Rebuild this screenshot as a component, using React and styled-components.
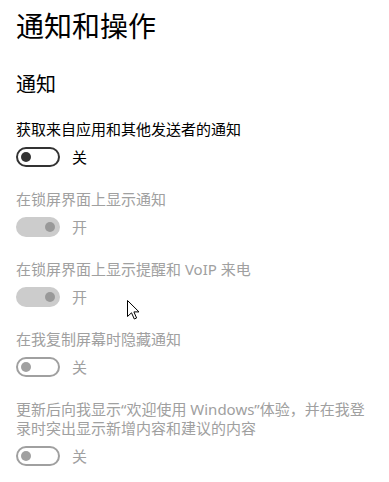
import styled, { createGlobalStyle } from "styled-components";

const GlobalStyle = createGlobalStyle`
  html, body {
    margin: 0;
    padding: 0;
    background: #fff;
  }
  body {
    font-family: "Noto Sans", "Noto Sans CJK SC", sans-serif;
  }
`;

const Page = styled.div`
  position: relative;
  width: 389px;
  height: 482px;
  overflow: hidden;
  padding: 6px 16px 0 16px;
  box-sizing: border-box;
`;

const Title = styled.h1`
  margin: 0;
  font-size: 28px;
  line-height: 40px;
  font-weight: 400;
  color: #000;
`;

const Subtitle = styled.h2`
  margin: 25px 0 0 0;
  font-size: 20px;
  line-height: 28px;
  font-weight: 400;
  color: #000;
`;

const List = styled.div`
  display: flex;
  flex-direction: column;
  gap: 23px;
  margin-top: 21px;
`;

const Item = styled.div`
  display: flex;
  flex-direction: column;
  gap: 8px;
`;

const Label = styled.div`
  max-width: 352px;
  font-size: 15px;
  line-height: 19px;
  color: ${(p) => (p.$disabled ? "#a0a0a0" : "#000")};
`;

const Row = styled.div`
  display: flex;
  align-items: center;
  gap: 12px;
`;

const Track = styled.div`
  position: relative;
  width: 44px;
  height: 20px;
  box-sizing: border-box;
  border-radius: 10px;
  border: 2px solid ${(p) => p.$border};
  background: ${(p) => p.$fill};
`;

const Knob = styled.span`
  position: absolute;
  top: 3px;
  ${(p) => (p.$on ? "right: 3px;" : "left: 3px;")}
  width: 10px;
  height: 10px;
  border-radius: 50%;
  background: ${(p) => p.$color};
`;

const State = styled.span`
  font-size: 15px;
  line-height: 20px;
  color: ${(p) => (p.$disabled ? "#a0a0a0" : "#000")};
`;

const Cursor = styled.svg`
  position: absolute;
  left: 127px;
  top: 300px;
`;

function Toggle({ on, disabled, dim }) {
  let border = "#333";
  let fill = "transparent";
  let knob = "#333";
  if (disabled && on) {
    border = "#cccccc";
    fill = "#cccccc";
    knob = "#999";
  } else if (dim) {
    border = "#a0a0a0";
    knob = "#a0a0a0";
  }
  return (
    <Row>
      <Track $border={border} $fill={fill}>
        <Knob $on={on} $color={knob} />
      </Track>
      <State $disabled={disabled || dim}>{on ? "开" : "关"}</State>
    </Row>
  );
}

const items = [
  { label: "获取来自应用和其他发送者的通知", on: false },
  { label: "在锁屏界面上显示通知", on: true, disabled: true },
  { label: "在锁屏界面上显示提醒和 VoIP 来电", on: true, disabled: true },
  { label: "在我复制屏幕时隐藏通知", on: false, dim: true },
  {
    label: "更新后向我显示“欢迎使用 Windows”体验，并在我登录时突出显示新增内容和建议的内容",
    on: false,
    dim: true,
  },
];

export default function App() {
  return (
    <Page>
      <GlobalStyle />
      <Title>通知和操作</Title>
      <Subtitle>通知</Subtitle>
      <List>
        {items.map((it) => (
          <Item key={it.label}>
            <Label $disabled={it.disabled || it.dim}>{it.label}</Label>
            <Toggle on={it.on} disabled={it.disabled} dim={it.dim} />
          </Item>
        ))}
      </List>
      <Cursor width="13" height="20" viewBox="0 0 13 20">
        <path
          d="M0.5 0.5 L0.5 16.5 L4.5 12.8 L7.3 19 L9.6 18 L6.9 11.9 L12 11.9 Z"
          fill="#fff"
          stroke="#000"
          strokeWidth="1"
          strokeLinejoin="round"
        />
      </Cursor>
    </Page>
  );
}
